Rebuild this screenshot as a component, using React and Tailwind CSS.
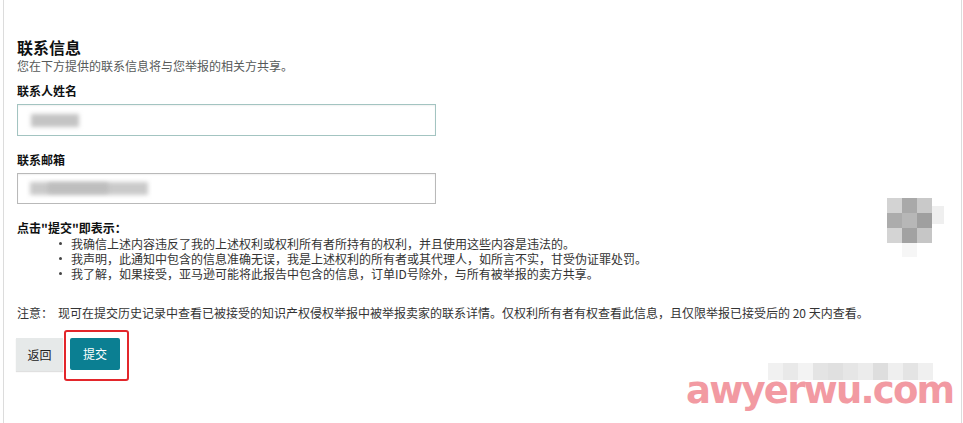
import React from 'react'

const bullets = [
  '我确信上述内容违反了我的上述权利或权利所有者所持有的权利，并且使用这些内容是违法的。',
  '我声明，此通知中包含的信息准确无误，我是上述权利的所有者或其代理人，如所言不实，甘受伪证罪处罚。',
  '我了解，如果接受，亚马逊可能将此报告中包含的信息，订单ID号除外，与所有被举报的卖方共享。',
]

const mosaic = [
  ['#d3d3d3', '#a9a9a9', '#c9c9c9'],
  ['#acacac', '#b7b7b7', '#9f9f9f'],
  ['#d4d4d4', '#a2a2a2', '#c6c6c6'],
]

const strip = ['#f1f1f1', '#e9e9e9', '#f3f3f3', '#e4e4e4', '#e0e0e0', '#e6e6e6', '#ececec', '#dedede', '#efefef', '#e4e4e4', '#f0f0f0']

const App = () => {
  return (
    <div
      className="relative w-[963px] h-[423px] overflow-hidden bg-white text-[#333]"
      style={{ fontFamily: '"Noto Sans CJK SC", "Liberation Sans", sans-serif' }}
    >
      <div className="ml-[3px] w-[959px] h-full border-l border-r border-[#dcdcdc] pl-[13px] pt-[37px]">
        {/* Heading */}
        <h2 className="text-[16px] leading-[20px] font-bold text-[#0f1111]">联系信息</h2>
        <p className="mt-[1px] text-[12px] leading-[16px] text-[#565959]">您在下方提供的联系信息将与您举报的相关方共享。</p>

        {/* Contact name */}
        <label className="block mt-[9px] text-[12px] leading-[16px] font-bold text-[#0f1111]">联系人姓名</label>
        <div className="relative mt-[5px] w-[419px] h-[32px] border border-[#a3c4c1] bg-white shadow-[inset_0_1px_2px_rgba(0,0,0,0.06)]">
          <div className="absolute left-[13px] top-[9px] w-[48px] h-[13px] bg-[#c4c4c4] blur-[2px]" />
        </div>

        {/* Contact email */}
        <label className="block mt-[16px] text-[12px] leading-[16px] font-bold text-[#0f1111]">联系邮箱</label>
        <div className="relative mt-[5px] w-[419px] h-[31px] border border-[#b9b9b9] bg-white shadow-[inset_0_1px_2px_rgba(0,0,0,0.06)]">
          <div className="absolute left-[12px] top-[8px] w-[118px] h-[13px] bg-[#cacaca] blur-[2px]" />
          <div className="absolute left-[30px] top-[9px] w-[60px] h-[10px] bg-[#bdbdbd] blur-[2px]" />
        </div>

        {/* Declaration */}
        <p className="mt-[16px] text-[12px] leading-[16px] font-bold text-[#0f1111]">点击"提交"即表示：</p>
        <ul className="flex flex-col text-[12px] leading-[15px]">
          {bullets.map((b) => (
            <li key={b} className="flex items-center h-[15px] pl-[42px] gap-[9px]">
              <span className="w-[3px] h-[3px] rounded-full bg-[#444]" />
              <span>{b}</span>
            </li>
          ))}
        </ul>

        <p className="mt-[24px] text-[12px] leading-[16px] flex gap-[5px]">
          <span>注意：</span>
          <span>现可在提交历史记录中查看已被接受的知识产权侵权举报中被举报卖家的联系详情。仅权利所有者有权查看此信息，且仅限举报已接受后的 20 天内查看。</span>
        </p>

        {/* Buttons */}
        <div className="mt-[17px] flex gap-[7px]">
          <button className="w-[47px] h-[33px] -ml-[1px] bg-[#e6e9e9] text-[12px] text-[#222] shadow-[0_1px_1px_rgba(0,0,0,0.12)]">返回</button>
          <div className="relative">
            <button className="w-[50px] h-[32px] rounded-[2px] bg-[#0b7f92] text-[12px] text-white">提交</button>
            <div className="absolute left-[-6px] top-[-8px] w-[65px] h-[51px] rounded-[3px] border-[2.5px] border-[#e3262b]" />
          </div>
        </div>
      </div>

      {/* Pixelated patch */}
      <div className="absolute left-[887px] top-[198px] grid grid-cols-3">
        {mosaic.flat().map((c, i) => (
          <div key={i} className="w-[15px] h-[15px]" style={{ backgroundColor: c }} />
        ))}
      </div>
      <div className="absolute left-[932px] top-[206px] w-[12px] h-[18px] bg-[#efefef]" />
      <div className="absolute left-[902px] top-[243px] w-[15px] h-[14px] bg-[#f6f6f6]" />

      {/* Watermark */}
      <div className="absolute left-[768px] top-[363px] flex">
        {strip.map((c, i) => (
          <div key={i} className="w-[15px] h-[17px]" style={{ backgroundColor: c }} />
        ))}
      </div>
      <div
        className="absolute left-[686px] top-[369px] text-[37px] leading-[44px] font-bold text-[#f29aa2] tracking-[-1.8px]"
        style={{ fontFamily: '"DejaVu Sans", sans-serif' }}
      >
        awyerwu.com
      </div>
    </div>
  )
}

export default App
